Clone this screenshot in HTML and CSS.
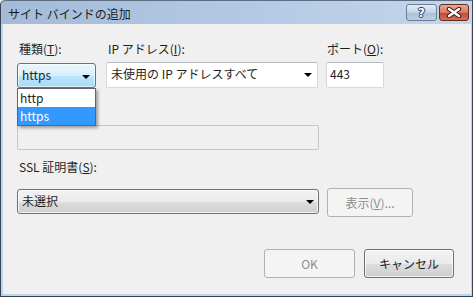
FILE: index.html
```html
<!DOCTYPE html>
<html lang="ja">
<head>
    <meta charset="UTF-8">
    <meta name="viewport" content="width=device-width, initial-scale=1.0">
    <title>サイト バインドの追加</title>
    <link rel="stylesheet" href="styles.css">
</head>
<body>
    <div class="window">
        <!-- Title bar -->
        <div class="titlebar">
            <span class="title">サイト バインドの追加</span>
            <div class="caption-buttons">
                <span class="cap-btn help">?</span>
                <span class="cap-btn close">
                    <svg width="16" height="11" viewBox="0 0 16 11">
                        <path d="M3 2 L13 9 M13 2 L3 9" stroke="#4a1a12" stroke-width="4.5" stroke-linecap="round"/>
                        <path d="M3 2 L13 9 M13 2 L3 9" stroke="#ffffff" stroke-width="2.4" stroke-linecap="round"/>
                    </svg>
                </span>
            </div>
        </div>

        <div class="client">
            <!-- Type / IP / Port -->
            <div class="top-row">
                <div class="field type-field">
                    <label class="lbl">種類(<u>T</u>):</label>
                    <div class="combo combo-hot">https<span class="arrow"></span></div>
                    <ul class="dropdown">
                        <li>http</li>
                        <li class="selected">https</li>
                    </ul>
                </div>
                <div class="field ip-field">
                    <label class="lbl">IP アドレス(<u>I</u>):</label>
                    <div class="combo combo-edit">未使用の IP アドレスすべて<span class="arrow"></span></div>
                </div>
                <div class="field port-field">
                    <label class="lbl">ポート(<u>O</u>):</label>
                    <div class="textbox">443</div>
                </div>
            </div>

            <div class="textbox host-box disabled"></div>

            <label class="lbl ssl-label">SSL 証明書(<u>S</u>):</label>
            <div class="ssl-row">
                <div class="combo combo-button ssl-combo">未選択<span class="arrow"></span></div>
                <button class="btn view-btn" disabled>表示(<u>V</u>)...</button>
            </div>

            <div class="footer">
                <button class="btn ok-btn" disabled>OK</button>
                <button class="btn cancel-btn">キャンセル</button>
            </div>
        </div>
    </div>
</body>
</html>
```

FILE: styles.css
```css
body {
    margin: 0;
    font-family: "Noto Sans CJK JP", "Noto Sans", sans-serif;
    font-size: 12px;
    color: #1e1e1e;
    background-color: #f0f0f0;
}

.window {
    width: 473px;
    height: 297px;
    box-sizing: border-box;
    display: flex;
    flex-direction: column;
    border-left: 1px solid #3a4450;
    border-right: 1px solid #3a4450;
    border-bottom: 1px solid #3a4450;
    border-top-left-radius: 5px;
    background-color: #bcd4ec;
    padding: 0 1px 2px 2px;
    overflow: hidden;
}

/* Title bar */
.titlebar {
    height: 24px;
    margin: 0 -1px 0 -2px;
    padding: 0 3px 0 7px;
    display: flex;
    align-items: center;
    justify-content: space-between;
    background: linear-gradient(to right, #a3bbd8, #b6cbe5 60%, #c3d6ec);
    border-top: 1px solid #5e6e80;
    border-top-left-radius: 5px;
    box-sizing: border-box;
}

.title {
    font-size: 12px;
    line-height: 15px;
    color: #1a1a1a;
    padding-top: 1px;
}

.caption-buttons {
    display: flex;
    gap: 2px;
    align-self: flex-start;
    margin-top: 3px;
}

.cap-btn {
    height: 17px;
    box-sizing: border-box;
    border-radius: 3px;
    display: flex;
    align-items: center;
    justify-content: center;
}

.help {
    width: 31px;
    border: 1px solid #6a7d95;
    background: linear-gradient(to bottom, #e4edf7, #c3d3e6 50%, #a9bfd9 51%, #bccee3);
    color: #ffffff;
    font-family: "DejaVu Sans", sans-serif;
    font-weight: bold;
    font-size: 12px;
    text-shadow: 0 0 1px #2d3e55, 1px 0 0 #2d3e55, -1px 0 0 #2d3e55, 0 1px 0 #2d3e55, 0 -1px 0 #2d3e55;
}

.close {
    width: 30px;
    border: 1px solid #6b2c20;
    background: linear-gradient(to bottom, #e8a795, #d47a64 50%, #c4462d 51%, #d0735c);
}

/* Client area */
.client {
    flex: 1;
    display: flex;
    flex-direction: column;
    background-color: #f0f0f0;
    padding: 17px 17px 16px 14px;
}

.lbl {
    display: block;
    line-height: 15px;
    padding-left: 2px;
    margin-bottom: 7px;
}

.top-row {
    display: flex;
    align-items: flex-start;
}

.field {
    position: relative;
}

.type-field {
    width: 79px;
    margin-right: 10px;
}

.ip-field {
    width: 212px;
    margin-right: 8px;
}

.port-field {
    width: 58px;
}

.port-field .lbl {
    padding-left: 1px;
}

.combo {
    position: relative;
    height: 25px;
    box-sizing: border-box;
    line-height: 22px;
    padding-left: 4px;
    white-space: nowrap;
}

.combo-hot {
    border: 1px solid #3c7fb1;
    border-radius: 3px;
    background: linear-gradient(to bottom, #eaf6fd, #d9f0fc 50%, #bee6fd 51%, #a7d9f5);
    box-shadow: inset 0 0 0 1px rgba(255, 255, 255, 0.6);
}

.combo-edit {
    border: 1px solid #d5d8dd;
    border-top-color: #b7bbc1;
    border-radius: 2px;
    background-color: #ffffff;
    height: 26px;
    margin-top: -1px;
}

.combo-button {
    border: 1px solid #707070;
    border-radius: 3px;
    background: linear-gradient(to bottom, #f2f2f2, #ebebeb 50%, #dddddd 51%, #cfcfcf);
    box-shadow: inset 0 0 0 1px rgba(255, 255, 255, 0.7);
}

.arrow {
    position: absolute;
    right: 4px;
    top: 10px;
    width: 0;
    height: 0;
    border-left: 4px solid transparent;
    border-right: 4px solid transparent;
    border-top: 4px solid #000000;
}

.combo-hot .arrow {
    right: 5px;
    top: 11px;
}

.combo-edit .arrow {
    right: 5px;
    top: 10px;
}

/* Open list of the type combo */
.dropdown {
    position: absolute;
    left: 0;
    top: 47px;
    width: 79px;
    margin: 0;
    padding: 0;
    list-style: none;
    background-color: #ffffff;
    border: 1px solid #646464;
    box-sizing: border-box;
    box-shadow: 2px 2px 3px rgba(0, 0, 0, 0.35);
    z-index: 2;
}

.dropdown li {
    height: 18px;
    line-height: 18px;
    padding-left: 2px;
}

.dropdown li.selected {
    height: 18px;
    background-color: #3399ff;
    color: #ffffff;
}

.textbox {
    height: 26px;
    box-sizing: border-box;
    margin-top: -1px;
    border: 1px solid #d5d8dd;
    border-top-color: #b7bbc1;
    border-radius: 2px;
    background-color: #ffffff;
    line-height: 22px;
    padding-left: 3px;
}

.host-box {
    width: 302px;
    height: 25px;
    margin-top: 37px;
}

.textbox.disabled {
    background-color: #f0f0f0;
    border-color: #c8c8c8;
}

.ssl-label {
    margin-top: 9px;
    margin-bottom: 14px;
}

.ssl-row {
    display: flex;
    align-items: flex-start;
}

.ssl-combo {
    width: 302px;
    margin-top: 1px;
    margin-right: 8px;
}

.btn {
    font-family: inherit;
    font-size: 12px;
    height: 29px;
    box-sizing: border-box;
    padding: 0;
    border: 1px solid #707070;
    border-radius: 3px;
    color: #1e1e1e;
    background: linear-gradient(to bottom, #f2f2f2, #ebebeb 50%, #dddddd 51%, #cfcfcf);
    box-shadow: inset 0 0 0 1px rgba(255, 255, 255, 0.7);
}

.btn:disabled {
    color: #8d8d8d;
    border-color: #adb2b5;
    background: #f4f4f4;
    box-shadow: none;
}

.view-btn {
    width: 86px;
}

.footer {
    margin-top: auto;
    display: flex;
    justify-content: flex-end;
    gap: 9px;
}

.ok-btn {
    width: 91px;
}

.cancel-btn {
    width: 90px;
}
```
